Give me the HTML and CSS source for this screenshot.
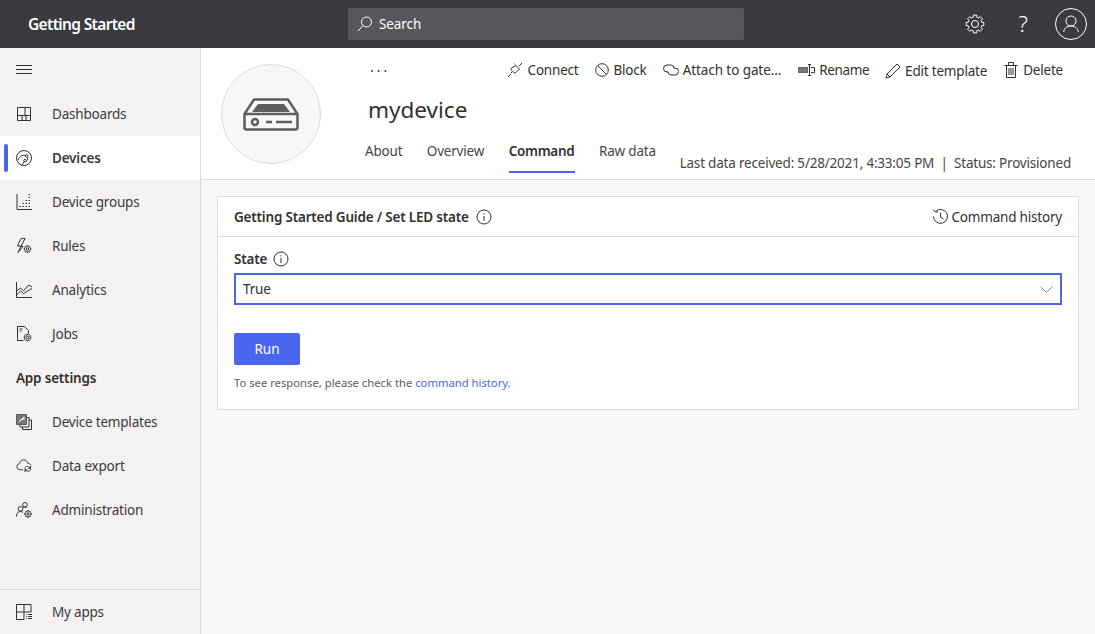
FILE: index.html
```html
<!DOCTYPE html>
<html>
	<head>
		<meta charset="UTF-8">
		<title>Getting Started</title>
		<link rel="stylesheet" href="styles.css">
	</head>
	<body>
		<div class="topbar">
			<div class="app-name">Getting Started</div>
			<div class="search">
				<svg class="ico" width="18" height="18" viewBox="0 0 18 18"><circle cx="10.5" cy="7" r="5"/><path d="M7 10.5L2 16"/></svg>
				<span>Search</span>
			</div>
			<div class="top-icons">
				<svg class="ico" width="20" height="20" viewBox="0 0 20 20">
					<defs><path id="gear" class="gear" d="M16.76 8.19L18.86 8.44V11.56L16.76 11.81L16.06 13.5L17.37 15.16L15.16 17.37L13.5 16.06L11.81 16.76L11.56 18.86H8.44L8.19 16.76L6.5 16.06L4.84 17.37L2.63 15.16L3.94 13.5L3.24 11.81L1.14 11.56V8.44L3.24 8.19L3.94 6.5L2.63 4.84L4.84 2.63L6.5 3.94L8.19 3.24L8.44 1.14H11.56L11.81 3.24L13.5 3.94L15.16 2.63L17.37 4.84L16.06 6.5z"/></defs>
					<use href="#gear"/><circle cx="10" cy="10" r="3.5"/>
				</svg>
				<span class="help">?</span>
				<div class="user">
					<svg class="ico" width="20" height="20" viewBox="0 0 20 20"><circle cx="10" cy="7" r="5"/><path d="M2.8 18c0-3.500 3-6 7.200-6s7.200 2.500 7.200 6"/></svg>
				</div>
			</div>
		</div>
		<div class="main">
			<div class="sidebar">
				<div class="burger">
					<svg class="ico" width="16" height="10" viewBox="0 0 16 10"><path d="M0 .5h16M0 4.500h16M0 8.500h16"/></svg>
				</div>
				<a class="nav-item">
					<svg class="ico" width="16" height="16" viewBox="0 0 16 16"><path d="M1.500 1.500h13v13h-13zM1.500 9.500h13M9 1.500v8M6 9.500v5M10 9.500v5"/></svg>
					<span>Dashboards</span>
				</a>
				<a class="nav-item active">
					<svg class="ico" width="16" height="16" viewBox="0 0 16 16"><circle cx="8" cy="8" r="7.500"/><circle cx="10.700" cy="6" r="1.300"/><circle cx="9" cy="10.700" r="1.300"/><path d="M2 10c2-4 4-5 7.500-4.500M11.500 7.500c.5 2 0 3-1.300 3.500M8 12l-2 3"/></svg>
					<span>Devices</span>
				</a>
				<a class="nav-item">
					<svg class="ico" width="16" height="16" viewBox="0 0 16 16"><path d="M1 0v15.500h15"/><path d="M3.500 12.500h1.500M6.500 12.500h1.500M6.500 9.500h1.500M9.500 12.500h1.500M9.500 9.500h1.500M9.500 6.500h1.500M12.500 12.500h1.500M12.500 9.500h1.500M12.500 6.500h1.500M12.500 3.500h1.500M12.500.8h1.500"/></svg>
					<span>Device groups</span>
				</a>
				<a class="nav-item">
					<svg class="ico" width="16" height="16" viewBox="0 0 16 16"><path d="M5 .5L1.500 8H5L2 14.500l5-6H5L9 .5z"/><use href="#gear" transform="translate(7.700 7.200) scale(.38)"/><circle cx="11.500" cy="11" r="1.200"/></svg>
					<span>Rules</span>
				</a>
				<a class="nav-item">
					<svg class="ico" width="16" height="16" viewBox="0 0 16 16"><path d="M.5 0v15.500H16"/><path d="M.5 9l4-3 3 3 5-6 3.500 2M.5 13l4-4 3 2.500 8.500-5"/></svg>
					<span>Analytics</span>
				</a>
				<a class="nav-item">
					<svg class="ico" width="16" height="16" viewBox="0 0 16 16"><path d="M7.500 14.500h-6V.5h7l4 4v3"/><path d="M3.500 3h3M3.500 5h2"/><use href="#gear" transform="translate(7.700 7.700) scale(.38)"/><circle cx="11.500" cy="11.500" r="1.200"/></svg>
					<span>Jobs</span>
				</a>
				<div class="nav-head">App settings</div>
				<a class="nav-item">
					<svg class="ico" width="16" height="16" viewBox="0 0 16 16"><path d="M10.500 3.500h2.500v9.500H4v-2M13 6h2.500v9.500H6.500V13"/><path class="fill" d="M.5.5h10v10H.5z"/><path class="glyph" d="M3 8l5-5M4.500 5.500h3M8 3v2.500"/></svg>
					<span>Device templates</span>
				</a>
				<a class="nav-item">
					<svg class="ico" width="16" height="16" viewBox="0 0 17 17"><path d="M7.500 12.500H4A3.300 3.300 0 0 1 3.500 6C4 3.500 6 2 8 2s3.800 1 4.500 3.500c1.500 0 3 1 3.300 2.500"/><path d="M9.500 11.500c0-2.500 3-3.500 5-1.500l1 1M15.500 11.500c0 2.500-3 3.500-5 1.500l-1-1M15.500 8.500V11H13M9.500 15v-2.500H12"/></svg>
					<span>Data export</span>
				</a>
				<a class="nav-item">
					<svg class="ico" width="16" height="16" viewBox="0 0 16 16"><circle cx="9" cy="2.800" r="2.300"/><circle cx="4.500" cy="6.800" r="2.300"/><path d="M.5 14.500c0-3 1.500-5 4-5 1 0 1.800.3 2.500 1M7 5.800c.7-.6 1.600-.9 3.500-.5"/><use href="#gear" transform="translate(8.200 8.200) scale(.38)"/><circle cx="12" cy="12" r="1.200"/></svg>
					<span>Administration</span>
				</a>
				<div class="nav-spacer"></div>
				<a class="nav-item apps">
					<svg class="ico" width="16" height="16" viewBox="0 0 16 16"><path d="M8 15.500H.5V.5h14.500v7.500H.5M8 .5v15M10 10.500h.8M12 10.500h4M10 12.500h.8M12 12.500h4M10 14.500h.8M12 14.500h4"/></svg>
					<span>My apps</span>
				</a>
			</div>
			<div class="content">
				<div class="device-head">
					<div class="avatar">
						<svg class="ico" width="56" height="33" viewBox="0 0 56 33"><path d="M1.500 16L11 1.500h34L54.500 16v13.500a2 2 0 0 1-2 2h-49a2 2 0 0 1-2-2zM1.500 16h53"/><path class="fill" d="M9 14l6-8h26l6 8z"/><circle cx="12" cy="24" r="3"/><path d="M23 24h6M33 24h16"/></svg>
					</div>
					<div class="head-body">
						<div class="head-top">
							<span class="more">···</span>
							<div class="actions">
								<a class="action">
									<svg class="ico" width="16" height="16" viewBox="0 0 16 16"><path d="M1 15l3-3M15 1l-3 3M9 3.500l3.500 3.500-3.500 3.500c-1 1-2.500 0-3.500-1s-2-2.500-1-3.500zM5 11l-1-1M7 1.500l1 1"/></svg>
									Connect
								</a>
								<a class="action a-next">
									<svg class="ico" width="14" height="14" viewBox="0 0 14 14"><circle cx="7" cy="7" r="6.300"/><path d="M2.500 2.500l9 9"/></svg>
									Block
								</a>
								<a class="action a-tight a-next a-attach">
									<svg class="ico" width="16" height="12" viewBox="0 0 16 12"><path d="M5 8H4a3.400 3.400 0 0 1 0-7h4a3.400 3.400 0 0 1 3 3.500"/><path d="M11 4h1a3.400 3.400 0 0 1 0 7H8a3.400 3.400 0 0 1-3-3.500"/></svg>
									Attach to gate...
								</a>
								<a class="action a-tight a-rename">
									<svg class="ico" width="17" height="12" viewBox="0 0 17 12"><path class="fill" d="M.5 3.500h9v5h-9z"/><path d="M11.500 1v10M10 .5h3M10 11.500h3M13 3.500h3.500v5H13"/></svg>
									Rename
								</a>
								<a class="action a-tight a-next a-edit">
									<svg class="ico" width="16" height="16" viewBox="0 0 16 16"><path d="M1 15l1-4L12 1l3 3L5 14zM2 11l3 3"/></svg>
									Edit template
								</a>
								<a class="action">
									<svg class="ico" width="14" height="16" viewBox="0 0 14 16"><path d="M2.500 3.500h9v12h-9zM.5 3.500h13M4.500 3V.5h5V3M5 6v7M7 6v7M9 6v7"/></svg>
									Delete
								</a>
							</div>
						</div>
						<div class="device-name">mydevice</div>
						<div class="head-bottom">
							<div class="tabs">
								<a class="tab">About</a>
								<a class="tab">Overview</a>
								<a class="tab selected">Command</a>
								<a class="tab">Raw data</a>
							</div>
							<div class="status">Last data received: 5/28/2021, 4:33:05 PM <i>|</i> Status: Provisioned</div>
						</div>
					</div>
				</div>
				<div class="page">
					<div class="card">
						<div class="card-head">
							<div class="card-title">
								Getting Started Guide / Set LED state
								<svg class="ico" width="16" height="16" viewBox="0 0 16 16"><circle cx="8" cy="8" r="7"/><path d="M8 7v5M8 4.200v1.300"/></svg>
							</div>
							<a class="history">
								<svg class="ico" width="17" height="17" viewBox="0 0 17 17"><path d="M3.500 3.500A7 7 0 1 1 1.500 8.500M1 1.500l2.500 2.500L6 3.800M8.500 4.500v4.500l3 2"/></svg>
								Command history
							</a>
						</div>
						<div class="card-body">
							<div class="field-label">
								State
								<svg class="ico" width="16" height="16" viewBox="0 0 16 16"><circle cx="8" cy="8" r="7"/><path d="M8 7v5M8 4.200v1.300"/></svg>
							</div>
							<div class="select">
								<span>True</span>
								<svg class="ico chev" width="13" height="7" viewBox="0 0 13 7"><path d="M.5.500l6 6 6-6"/></svg>
							</div>
							<button class="run">Run</button>
							<p class="hint">To see response, please check the <a>command history</a>.</p>
						</div>
					</div>
				</div>
			</div>
		</div>
	</body>
</html>
```

FILE: styles.css
```css
* {
	margin: 0;
	padding: 0;
	box-sizing: border-box;
}
html, body {
	height: 100%;
	overflow: hidden;
}
body {
	font-family: "Noto Sans", "Open Sans", sans-serif;
	font-size: 13.5px;
	letter-spacing: -0.2px;
	color: #323130;
	display: flex;
	flex-direction: column;
}
.ico {
	fill: none;
	stroke: #323130;
	stroke-width: 1;
	flex-shrink: 0;
}
.ico .fill {
	fill: #7a7876;
	stroke: #605e5c;
}
.ico .glyph {
	stroke: #fff;
}
.gear {
	vector-effect: non-scaling-stroke;
}

.topbar {
	height: 48px;
	background: #3b3a3f;
	display: flex;
	align-items: center;
	flex-shrink: 0;
}
.app-name {
	width: 348px;
	padding-left: 28px;
	color: #fff;
	font-size: 15.5px;
	font-weight: 600;
	letter-spacing: -0.65px;
}
.search {
	width: 396px;
	height: 32px;
	background: #57565b;
	border-radius: 2px;
	color: #fff;
	display: flex;
	align-items: center;
	gap: 5px;
	padding-left: 8px;
	letter-spacing: -0.1px;
}
.search .ico, .top-icons .ico {
	stroke: #fff;
}
.top-icons {
	margin-left: auto;
	display: flex;
	align-items: center;
	padding-right: 8px;
}
.help {
	color: #fff;
	font-size: 22px;
	line-height: 26px;
	margin-bottom: 2px;
	font-weight: 300;
	margin-left: 30px;
	width: 16px;
	text-align: center;
}
.user {
	width: 32px;
	height: 32px;
	border: 1px solid #fff;
	border-radius: 50%;
	margin-left: 24px;
	display: flex;
	align-items: center;
	justify-content: center;
}

.main {
	flex: 1;
	display: flex;
	min-height: 0;
}
.sidebar {
	width: 201px;
	background: #f3f2f1;
	border-right: 1px solid #dcdcdc;
	display: flex;
	flex-direction: column;
	flex-shrink: 0;
}
.burger {
	height: 44px;
	padding-left: 16px;
	display: flex;
	align-items: center;
}
.nav-item {
	height: 44px;
	padding-left: 16px;
	display: flex;
	align-items: center;
	position: relative;
	color: #3b3a3f;
}
.nav-item span {
	margin-left: 20px;
}
.nav-item.active {
	background: #fff;
	font-weight: 600;
}
.nav-item.active::before {
	content: "";
	position: absolute;
	left: 4px;
	top: 8px;
	bottom: 8px;
	width: 4px;
	border-radius: 2px;
	background: #4a66f0;
}
.nav-head {
	height: 44px;
	padding-left: 16px;
	display: flex;
	align-items: center;
	font-weight: 600;
}
.nav-spacer {
	flex: 1;
}
.nav-item.apps {
	border-top: 1px solid #dcdcdc;
	height: 45px;
}

.content {
	flex: 1;
	min-width: 0;
	background: #f8f8f8;
	display: flex;
	flex-direction: column;
}
.device-head {
	height: 132px;
	background: #fff;
	border-bottom: 1px solid #dcdcdc;
	display: flex;
	padding: 16px 24px 0 20px;
}
.avatar {
	width: 100px;
	height: 100px;
	border-radius: 50%;
	background: #f7f7f7;
	border: 1px solid #dcdcdc;
	display: flex;
	align-items: center;
	justify-content: center;
	flex-shrink: 0;
}
.avatar .ico {
	stroke: #605e5c;
	stroke-width: 2.5;
}
.avatar .ico .fill {
	fill: #605e5c;
	stroke-width: 0;
}
.head-body {
	flex: 1;
	margin-left: 44px;
	min-width: 0;
	display: flex;
	flex-direction: column;
}
.head-top {
	display: flex;
	align-items: center;
	justify-content: space-between;
	height: 12px;
	margin-bottom: 2px;
}
.more {
	margin-left: 5px;
	font-size: 14px;
	letter-spacing: 3px;
}
.actions {
	display: flex;
	align-items: center;
	padding-right: 8px;
}
.action {
	display: flex;
	align-items: center;
	gap: 5px;
	white-space: nowrap;
	margin-left: 17px;
}
.action.a-tight {
	gap: 4px;
}
.action.a-next {
	margin-left: 16px;
}
.a-attach {
	letter-spacing: -0.08px;
}
.a-rename {
	letter-spacing: -0.4px;
}
.a-edit {
	padding-top: 2px;
}
.device-name {
	font-size: 22.5px;
	letter-spacing: 0;
	margin: 16px 0 0 3px;
	line-height: 32px;
}
.head-bottom {
	display: flex;
	justify-content: space-between;
	margin-top: 6px;
}
.tabs {
	display: flex;
}
.tab {
	height: 41px;
	padding-top: 10px;
	margin-right: 24.5px;
	color: #484644;
	white-space: nowrap;
	border-bottom: 2px solid transparent;
}
.tab:last-child {
	margin-right: 0;
}
.tab.selected {
	font-weight: 600;
	letter-spacing: -0.28px;
	color: #323130;
	border-bottom-color: #4a66f0;
}
.status {
	padding-top: 22px;
	color: #484644;
	white-space: nowrap;
}
.status i {
	font-style: normal;
	margin: 0 3px;
}

.page {
	padding: 16px;
}
.card {
	background: #fff;
	border: 1px solid #dcdcdc;
	height: 214px;
}
.card-head {
	height: 40px;
	border-bottom: 1px solid #dcdcdc;
	display: flex;
	align-items: center;
	justify-content: space-between;
	padding: 0 16px;
}
.card-title {
	display: flex;
	align-items: center;
	gap: 7px;
	font-weight: 600;
}
.history {
	display: flex;
	align-items: center;
	gap: 3px;
}
.card-body {
	padding: 12px 16px;
}
.field-label {
	display: flex;
	align-items: center;
	gap: 6px;
	font-weight: 600;
	height: 20px;
}
.select {
	margin-top: 4px;
	height: 32px;
	border: 2px solid #4a66f0;
	display: flex;
	align-items: center;
	justify-content: space-between;
	padding: 0 7px;
}
.select .chev {
	stroke: #8a8886;
}
.run {
	display: block;
	margin-top: 28px;
	width: 66px;
	height: 32px;
	background: #4a66f0;
	color: #fff;
	border: none;
	border-radius: 2px;
	font-family: inherit;
	font-size: 13.5px;
}
.hint {
	margin-top: 10px;
	font-size: 11.25px;
	letter-spacing: 0;
	color: #605e5c;
}
.hint a {
	color: #4a66f0;
}
```
